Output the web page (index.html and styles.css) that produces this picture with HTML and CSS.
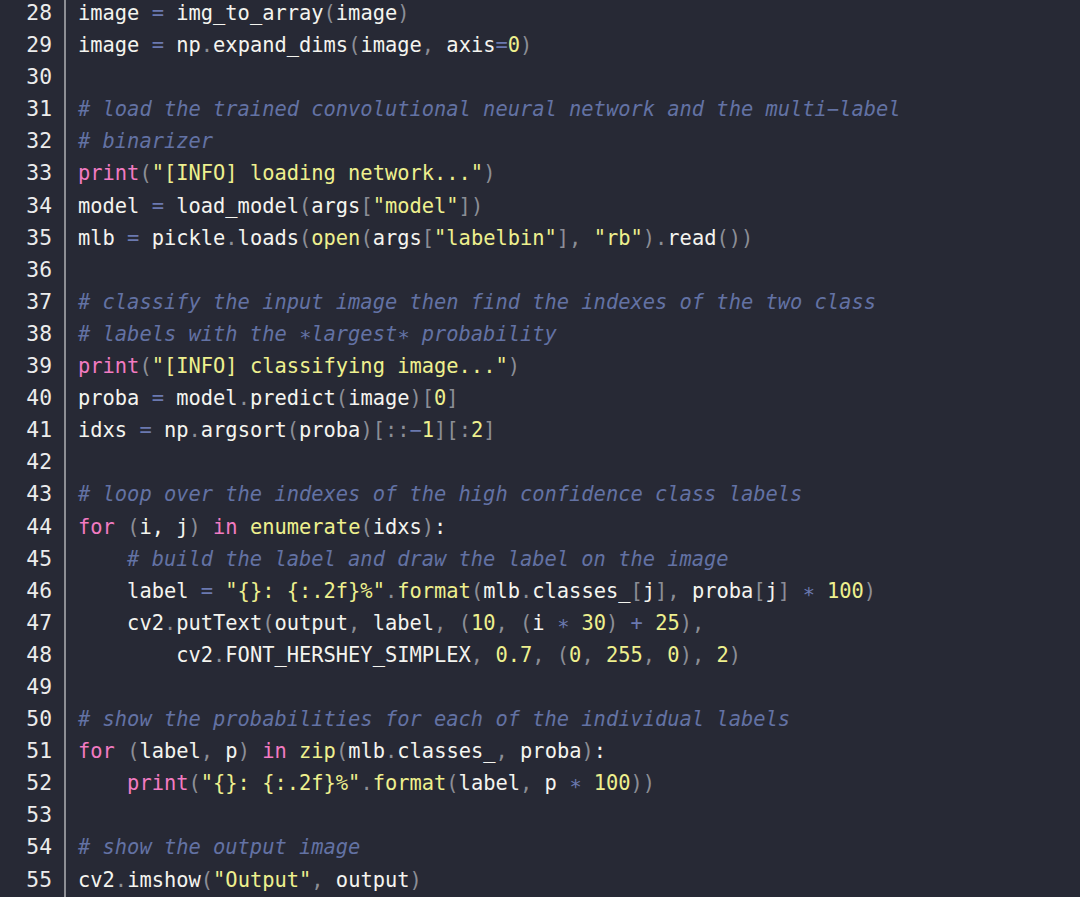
FILE: index.html
```html
<!DOCTYPE html>
<html>
<head>
<meta charset="utf-8">
<link rel="stylesheet" href="styles.css">
</head>
<body>
<div class="editor">
<div class="gutter">
<div>28</div><div>29</div><div>30</div><div>31</div><div>32</div><div>33</div><div>34</div><div>35</div><div>36</div><div>37</div><div>38</div><div>39</div><div>40</div><div>41</div><div>42</div><div>43</div><div>44</div><div>45</div><div>46</div><div>47</div><div>48</div><div>49</div><div>50</div><div>51</div><div>52</div><div>53</div><div>54</div><div>55</div>
</div>
<div class="code">
<div class="line">image <span class="o">=</span> img_to_array<span class="p">(</span>image<span class="p">)</span></div>
<div class="line">image <span class="o">=</span> np<span class="p">.</span>expand_dims<span class="p">(</span>image<span class="p">,</span> axis<span class="o">=</span><span class="n">0</span><span class="p">)</span></div>
<div class="line"> </div>
<div class="line"><span class="c"># load the trained convolutional neural network and the multi−label</span></div>
<div class="line"><span class="c"># binarizer</span></div>
<div class="line"><span class="k">print</span><span class="p">(</span><span class="s">"[INFO] loading network..."</span><span class="p">)</span></div>
<div class="line">model <span class="o">=</span> load_model<span class="p">(</span>args<span class="p">[</span><span class="s">"model"</span><span class="p">])</span></div>
<div class="line">mlb <span class="o">=</span> pickle<span class="p">.</span>loads<span class="p">(</span><span class="s">open</span><span class="p">(</span>args<span class="p">[</span><span class="s">"labelbin"</span><span class="p">],</span> <span class="s">"rb"</span><span class="p">).</span>read<span class="p">())</span></div>
<div class="line"> </div>
<div class="line"><span class="c"># classify the input image then find the indexes of the two class</span></div>
<div class="line"><span class="c"># labels with the ∗largest∗ probability</span></div>
<div class="line"><span class="k">print</span><span class="p">(</span><span class="s">"[INFO] classifying image..."</span><span class="p">)</span></div>
<div class="line">proba <span class="o">=</span> model<span class="p">.</span>predict<span class="p">(</span>image<span class="p">)[</span><span class="n">0</span><span class="p">]</span></div>
<div class="line">idxs <span class="o">=</span> np<span class="p">.</span>argsort<span class="p">(</span>proba<span class="p">)[::</span><span class="o">−</span><span class="n">1</span><span class="p">][:</span><span class="n">2</span><span class="p">]</span></div>
<div class="line"> </div>
<div class="line"><span class="c"># loop over the indexes of the high confidence class labels</span></div>
<div class="line"><span class="k">for</span> <span class="p">(</span>i, j<span class="p">)</span> <span class="k">in</span> <span class="s">enumerate</span><span class="p">(</span>idxs<span class="p">)</span>:</div>
<div class="line">    <span class="c"># build the label and draw the label on the image</span></div>
<div class="line">    label <span class="o">=</span> <span class="s">"{}: {:.2f}%"</span><span class="p">.</span><span class="s">format</span><span class="p">(</span>mlb<span class="p">.</span>classes_<span class="p">[</span>j<span class="p">],</span> proba<span class="p">[</span>j<span class="p">]</span> <span class="o">∗</span> <span class="n">100</span><span class="p">)</span></div>
<div class="line">    cv2<span class="p">.</span>putText<span class="p">(</span>output<span class="p">,</span> label<span class="p">,</span> <span class="p">(</span><span class="n">10</span><span class="p">,</span> <span class="p">(</span>i <span class="o">∗</span> <span class="n">30</span><span class="p">)</span> <span class="o">+</span> <span class="n">25</span><span class="p">),</span></div>
<div class="line">        cv2<span class="p">.</span>FONT_HERSHEY_SIMPLEX<span class="p">,</span> <span class="n">0.7</span><span class="p">,</span> <span class="p">(</span><span class="n">0</span><span class="p">,</span> <span class="n">255</span><span class="p">,</span> <span class="n">0</span><span class="p">),</span> <span class="n">2</span><span class="p">)</span></div>
<div class="line"> </div>
<div class="line"><span class="c"># show the probabilities for each of the individual labels</span></div>
<div class="line"><span class="k">for</span> <span class="p">(</span>label<span class="p">,</span> p<span class="p">)</span> <span class="k">in</span> <span class="s">zip</span><span class="p">(</span>mlb<span class="p">.</span>classes_<span class="p">,</span> proba<span class="p">)</span>:</div>
<div class="line">    <span class="k">print</span><span class="p">(</span><span class="s">"{}: {:.2f}%"</span><span class="p">.</span><span class="s">format</span><span class="p">(</span>label<span class="p">,</span> p <span class="o">∗</span> <span class="n">100</span><span class="p">))</span></div>
<div class="line"> </div>
<div class="line"><span class="c"># show the output image</span></div>
<div class="line">cv2<span class="p">.</span>imshow<span class="p">(</span><span class="s">"Output"</span><span class="p">,</span> output<span class="p">)</span></div>
</div>
</div>
</body>
</html>
```
FILE: styles.css
```css
html, body {
  margin: 0;
  padding: 0;
  background: #272935;
  overflow: hidden;
}
.editor {
  display: flex;
  margin-top: -3px;
  height: calc(100vh + 3px);
  font-family: "DejaVu Sans Mono", monospace;
  color: #f4f4ef;
}
.gutter {
  width: 52px;
  padding-right: 12px;
  border-right: 2px solid #8d8e94;
  text-align: right;
  font-size: 21.3px;
  line-height: 32.1px;
  color: #ececec;
}
.code {
  padding-left: 12px;
  font-size: 20.4px;
  line-height: 32.1px;
}
.line {
  height: 32.1px;
  white-space: pre;
}
.o { color: #6b79b0; }
.p { color: #8c8e96; }
.s { color: #eef08e; }
.n { color: #eef08e; }
.k { color: #f27bc2; }
.c { color: #6372a4; font-style: italic; }
```
